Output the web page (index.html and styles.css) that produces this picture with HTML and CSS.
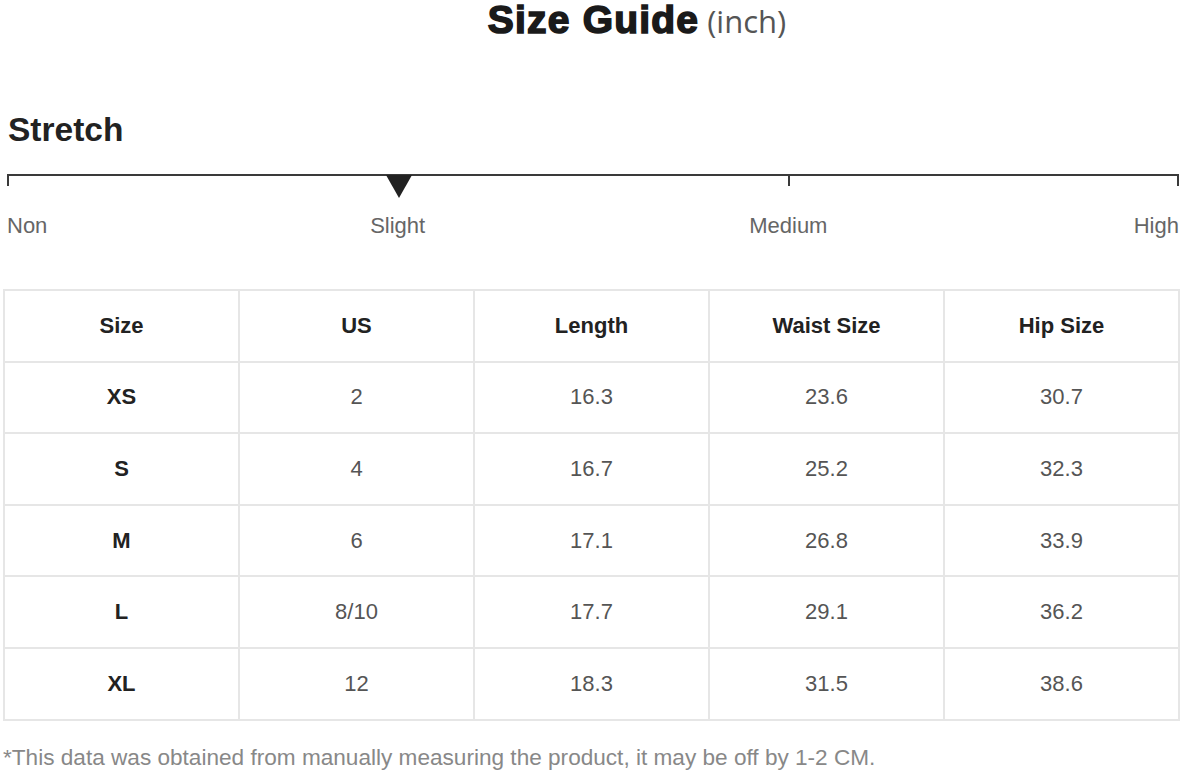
FILE: index.html
```html
<!DOCTYPE html>
<html>
<head>
<meta charset="utf-8">
<link rel="stylesheet" href="styles.css">
</head>
<body>
<div class="page">
  <h1 class="title"><span class="title-main">Size Guide</span><span class="title-unit">(inch)</span></h1>

  <h2 class="section">Stretch</h2>

  <div class="scale">
    <div class="scale-bar">
      <div class="seg"></div>
      <div class="seg"></div>
      <div class="seg seg-last"></div>
      <svg class="marker" width="26" height="23" viewBox="0 0 26 23"><polygon points="0,0 26,0 13,23" fill="#222"/></svg>
    </div>
    <div class="scale-labels">
      <span class="lbl lbl-non">Non</span>
      <span class="lbl lbl-slight">Slight</span>
      <span class="lbl lbl-medium">Medium</span>
      <span class="lbl lbl-high">High</span>
    </div>
  </div>

  <table class="sizes">
    <thead>
      <tr><th>Size</th><th>US</th><th>Length</th><th>Waist Size</th><th>Hip Size</th></tr>
    </thead>
    <tbody>
      <tr><th>XS</th><td>2</td><td>16.3</td><td>23.6</td><td>30.7</td></tr>
      <tr><th>S</th><td>4</td><td>16.7</td><td>25.2</td><td>32.3</td></tr>
      <tr><th>M</th><td>6</td><td>17.1</td><td>26.8</td><td>33.9</td></tr>
      <tr><th>L</th><td>8/10</td><td>17.7</td><td>29.1</td><td>36.2</td></tr>
      <tr><th>XL</th><td>12</td><td>18.3</td><td>31.5</td><td>38.6</td></tr>
    </tbody>
  </table>

  <p class="note">*This data was obtained from manually measuring the product, it may be off by 1-2 CM.</p>
</div>
</body>
</html>
```

FILE: styles.css
```css
html, body {
  margin: 0;
  padding: 0;
  background: #fff;
}
body {
  font-family: "Liberation Sans", Arial, sans-serif;
  color: #222;
}
.page {
  width: 1182px;
  display: flex;
  flex-direction: column;
}
.title {
  margin: 0;
  height: 40px;
  display: flex;
  justify-content: center;
  align-items: baseline;
  font-weight: 700;
  line-height: 40px;
  padding-left: 92px;
}
.title-main {
  font-family: "Liberation Sans", Arial, sans-serif;
  font-size: 39px;
  font-weight: 700;
  letter-spacing: 1.2px;
  color: #1a1a1a;
  -webkit-text-stroke: 1.6px #1a1a1a;
}
.title-unit {
  font-family: "Open Sans", sans-serif;
  font-weight: 400;
  font-size: 31px;
  color: #555;
  margin-left: 8px;
}
.section {
  margin: 70px 0 0 8px;
  font-size: 33.5px;
  line-height: 40px;
  font-weight: 700;
  color: #222;
}
.scale {
  margin: 24px 3px 0 7px;
  display: flex;
  flex-direction: column;
}
.scale-bar {
  position: relative;
  display: grid;
  grid-template-columns: 1fr 1fr 1fr;
  height: 12px;
}
.seg {
  border-top: 2px solid #3a3a3a;
  border-left: 2px solid #3a3a3a;
}
.seg-last {
  border-right: 2px solid #3a3a3a;
}
.marker {
  position: absolute;
  left: calc(33.333% - 12px);
  top: 1px;
}
.scale-labels {
  margin-top: 27px;
  display: grid;
  grid-template-columns: repeat(6, 1fr);
  font-size: 22px;
  line-height: 26px;
  color: #666;
}
.lbl-non { grid-column: 1; text-align: left; }
.lbl-slight { grid-column: 2 / span 2; text-align: center; }
.lbl-medium { grid-column: 4 / span 2; text-align: center; }
.lbl-high { grid-column: 6; text-align: right; }

.sizes {
  margin: 50px 0 0 3px;
  width: 1177px;
  border-collapse: collapse;
  table-layout: fixed;
  font-size: 22px;
}
.sizes th,
.sizes td {
  border: 2px solid #e6e6e6;
  height: 69.6px;
  padding: 0;
  text-align: center;
  vertical-align: middle;
}
.sizes th {
  font-weight: 700;
  color: #222;
}
.sizes td {
  font-weight: 400;
  color: #555;
}
.note {
  margin: 24px 0 0 3px;
  font-size: 22.6px;
  line-height: 26px;
  color: #888;
}
```
